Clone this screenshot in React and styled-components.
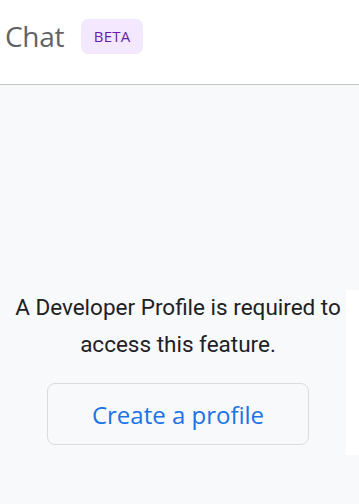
import styled, { createGlobalStyle } from 'styled-components'

const Global = createGlobalStyle`
  html, body {
    margin: 0;
    padding: 0;
    height: 100%;
    background: #f8f9fa;
    font-family: Roboto, "Liberation Sans", sans-serif;
  }
  #root {
    height: 100%;
  }
`;

export default function App() {
  return (
    <>
      <Global />
      <Page>
        <Header>
          <Title>Chat</Title>
          <Badge>BETA</Badge>
        </Header>
        <Main>
          <Content>
            <Message>A Developer Profile is required to access this feature.</Message>
            <ProfileButton>Create a profile</ProfileButton>
          </Content>
          <SidePanel />
        </Main>
      </Page>
    </>
  )
}

const Page = styled.div`
  display: flex;
  flex-direction: column;
  height: 100%;
  overflow: hidden;
`;

const Header = styled.header`
  display: flex;
  align-items: center;
  gap: 17px;
  height: 72px;
  padding: 0 0 12px 5px;
  background: #ffffff;
  border-bottom: 1px solid #c4c7c5;
  flex-shrink: 0;
`;

const Title = styled.h1`
  margin: 0;
  font-family: "Open Sans", Roboto, sans-serif;
  font-weight: 400;
  font-size: 28px;
  color: #5f6368;
  letter-spacing: -0.3px;
`;

const Badge = styled.span`
  display: inline-flex;
  align-items: center;
  justify-content: center;
  width: 62px;
  height: 35px;
  border-radius: 7px;
  background: #f3e8fd;
  color: #681da8;
  font-family: "Open Sans", Roboto, sans-serif;
  font-size: 15px;
  letter-spacing: 0.2px;
`;

const Main = styled.main`
  flex: 1;
  display: flex;
  align-items: flex-start;
  background: #f8f9fa;
`;

const Content = styled.div`
  flex: 0 0 336px;
  padding-left: 10px;
  padding-top: 204px;
  display: flex;
  flex-direction: column;
  align-items: center;
`;

const Message = styled.p`
  margin: 0;
  text-align: center;
  font-size: 22.5px;
  line-height: 37px;
  color: #202124;
`;

const ProfileButton = styled.button`
  margin-top: 20px;
  width: 262px;
  height: 62px;
  border: 1px solid #dadce0;
  border-radius: 8px;
  background: #f8f9fa;
  color: #1a73e8;
  font-family: "Open Sans", Roboto, sans-serif;
  font-size: 24px;
  cursor: pointer;
`;

const SidePanel = styled.aside`
  flex: 0 0 240px;
  height: 165px;
  margin-top: 205px;
  background: #ffffff;
`;
